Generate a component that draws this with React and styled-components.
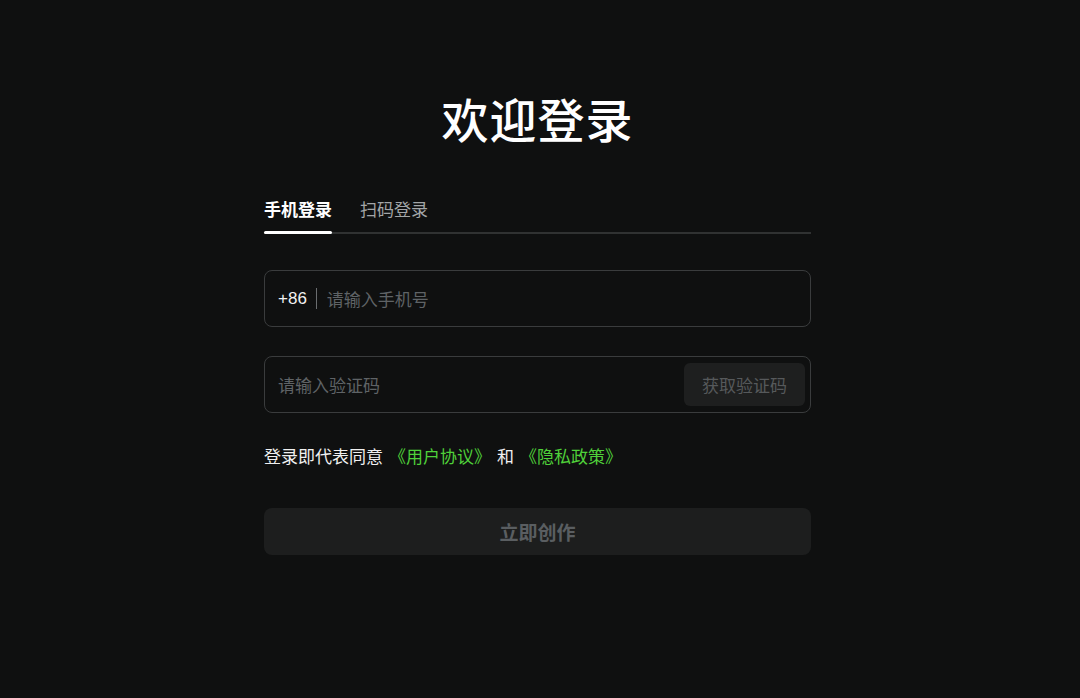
import React, { useState } from 'react';
import styled, { createGlobalStyle } from 'styled-components';

const GlobalStyle = createGlobalStyle`
  html, body {
    margin: 0;
    padding: 0;
    background: #0f1010;
  }
  body {
    font-family: "Noto Sans CJK SC", "Noto Sans", sans-serif;
  }
`;

const Page = styled.div`
  min-height: 698px;
  display: flex;
  justify-content: center;
  background: #0f1010;
`;

const Panel = styled.div`
  width: 547px;
  padding-top: 88px;
  margin-left: -5px;
  display: flex;
  flex-direction: column;
`;

const Title = styled.h1`
  margin: 0;
  font-size: 47px;
  line-height: 60px;
  font-weight: 500;
  color: #ffffff;
  text-align: center;
  letter-spacing: 1px;
`;

const Tabs = styled.div`
  margin-top: 49px;
  display: flex;
  gap: 28px;
  border-bottom: 2px solid #303232;
`;

const Tab = styled.button`
  position: relative;
  background: none;
  border: none;
  padding: 0 0 11px;
  font-family: inherit;
  font-size: 17px;
  line-height: 24px;
  font-weight: ${p => (p.$active ? 700 : 400)};
  color: ${p => (p.$active ? '#ffffff' : '#a3a6a8')};
  cursor: pointer;

  &::after {
    content: '';
    display: ${p => (p.$active ? 'block' : 'none')};
    position: absolute;
    left: 0;
    right: 0;
    bottom: -2px;
    height: 3px;
    border-radius: 2px;
    background: #ffffff;
  }
`;

const Field = styled.div`
  margin-top: ${p => p.$top}px;
  height: 57px;
  box-sizing: border-box;
  border: 1px solid #3a3c3d;
  border-radius: 8px;
  display: flex;
  align-items: center;
  padding: 0 5px 0 13px;
`;

const Prefix = styled.span`
  font-family: "Liberation Sans", Arial, sans-serif;
  font-size: 17px;
  color: #f2f2f2;
  padding-right: 9px;
  border-right: 1px solid #6a6d6f;
  line-height: 21px;
  margin-right: 10px;
`;

const Input = styled.input`
  flex: 1;
  min-width: 0;
  background: transparent;
  border: none;
  outline: none;
  font-family: inherit;
  font-size: 17px;
  color: #e6e6e6;
  padding: 0;

  &::placeholder {
    color: #5f6366;
  }
`;

const CodeButton = styled.button`
  height: 43px;
  width: 121px;
  border: none;
  border-radius: 6px;
  background: #1e1f1f;
  color: #56595b;
  font-family: inherit;
  font-size: 17px;
  cursor: pointer;
`;

const Agreement = styled.p`
  margin: 31px 0 0;
  font-size: 17px;
  line-height: 24px;
  color: #f0f0f0;
  display: flex;
  gap: 6px;
`;

const Link = styled.a`
  color: #4fd13a;
  text-decoration: none;
`;

const Submit = styled.button`
  margin-top: 40px;
  height: 47px;
  border: none;
  border-radius: 8px;
  background: #1d1e1e;
  color: #5a5e61;
  font-family: inherit;
  font-size: 19px;
  font-weight: 700;
  cursor: pointer;
`;

export default function App() {
  const [tab, setTab] = useState('phone');
  return (
    <Page>
      <GlobalStyle />
      <Panel>
        <Title>欢迎登录</Title>
        <Tabs>
          <Tab $active={tab === 'phone'} onClick={() => setTab('phone')}>手机登录</Tab>
          <Tab $active={tab === 'qr'} onClick={() => setTab('qr')}>扫码登录</Tab>
        </Tabs>
        <Field $top={36}>
          <Prefix>+86</Prefix>
          <Input placeholder="请输入手机号" />
        </Field>
        <Field $top={29}>
          <Input placeholder="请输入验证码" />
          <CodeButton>获取验证码</CodeButton>
        </Field>
        <Agreement>
          <span>登录即代表同意</span>
          <Link href="#">《用户协议》</Link>
          <span>和</span>
          <Link href="#">《隐私政策》</Link>
        </Agreement>
        <Submit>立即创作</Submit>
      </Panel>
    </Page>
  );
}
